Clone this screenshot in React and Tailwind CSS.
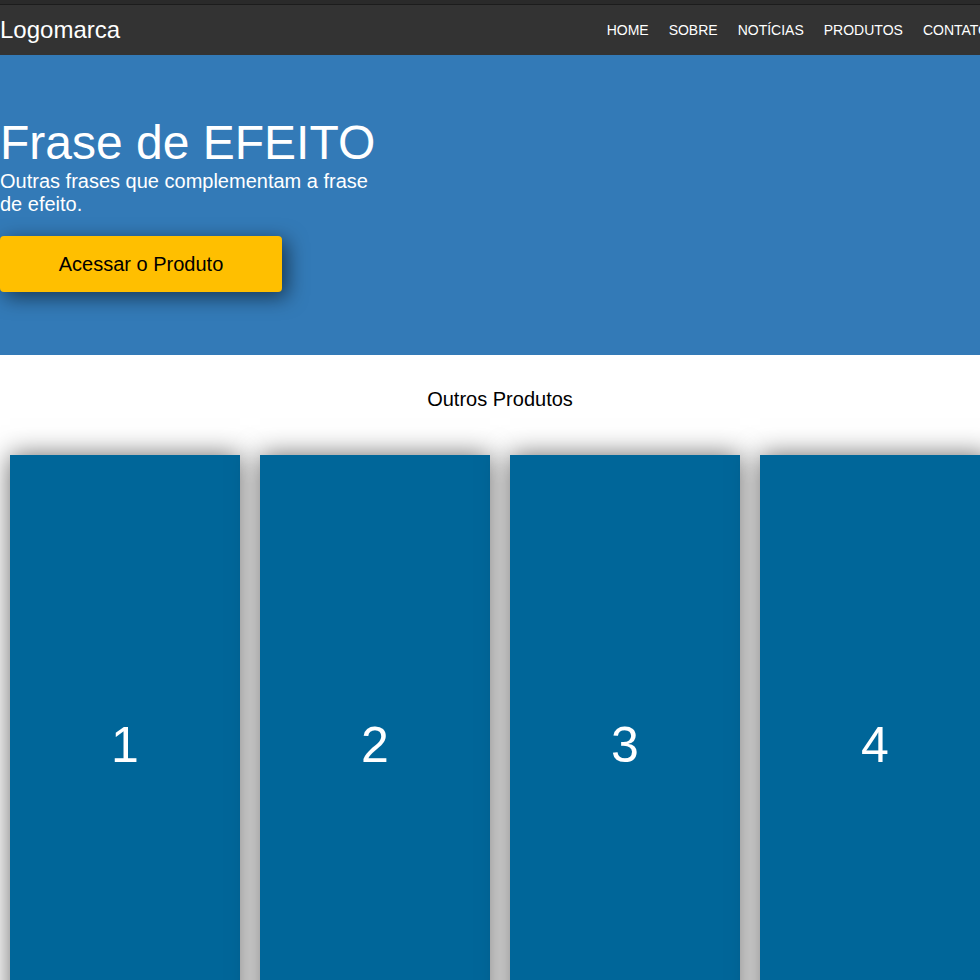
const links = ["HOME", "SOBRE", "NOTÍCIAS", "PRODUTOS", "CONTATO"];
const produtos = [1, 2, 3, 4];

const App = () => {
  return (
    <div className="w-[980px] overflow-hidden font-['Liberation_Sans',Arial,sans-serif]">
      <div className="w-[1000px]">
        {/* Top strip */}
        <div className="h-[5px] bg-[#2a2a2a] border-b border-[#1c1c1c]"></div>

        {/* Navbar */}
        <nav className="h-[50px] bg-[#333333] flex items-center justify-between pr-[11px]">
          <span className="text-white text-[24px]">Logomarca</span>
          <ul className="flex gap-5 text-white text-[14px]">
            {links.map((item) => (
              <li key={item}>{item}</li>
            ))}
          </ul>
        </nav>

        {/* Hero */}
        <section className="h-[300px] bg-[#337ab7] flex flex-col justify-center pb-[4px]">
          <div className="w-[385px] text-white">
            <h1 className="text-[48px] leading-[55px]">Frase de EFEITO</h1>
            <p className="text-[20px] leading-[23px]">
              Outras frases que complementam a frase de efeito.
            </p>
          </div>
          <button className="mt-5 w-[282px] h-[56px] bg-[#ffbf00] rounded text-[20px] text-black shadow-[5px_5px_20px_rgba(0,0,0,0.55)]">
            Acessar o Produto
          </button>
        </section>

        {/* Outros Produtos */}
        <section className="bg-white pt-[33px]">
          <h2 className="text-center text-[20px] leading-[23px] text-black mb-[44px]">
            Outros Produtos
          </h2>
          <div className="flex">
            {produtos.map((n) => (
              <div key={n} className="w-[250px] px-[10px]">
                <div className="h-[580px] bg-[#006699] flex items-center justify-center text-white text-[50px] shadow-[0_0_25px_rgba(0,0,0,0.6)]">
                  {n}
                </div>
              </div>
            ))}
          </div>
        </section>
      </div>
    </div>
  );
};

export default App;
